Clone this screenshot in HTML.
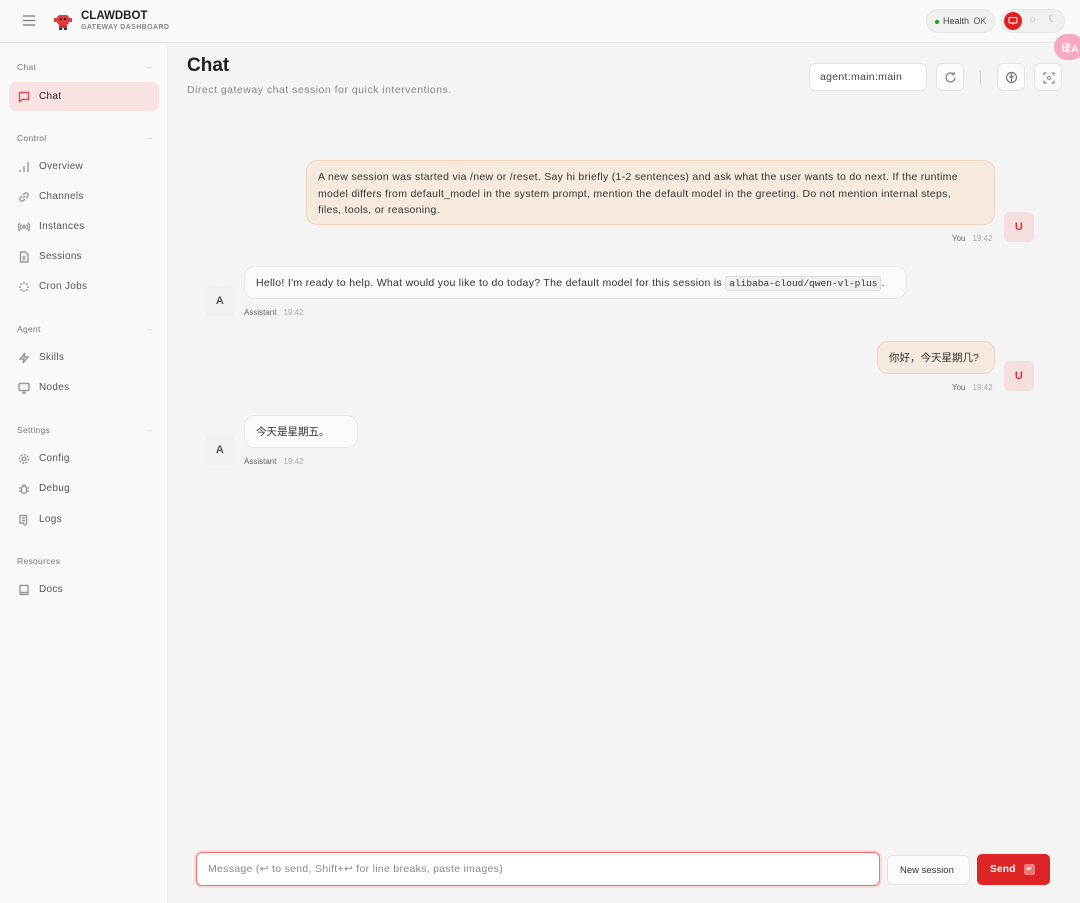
<!DOCTYPE html>
<html><head><meta charset="utf-8"><style>
*{box-sizing:border-box;margin:0;padding:0}
body{width:1080px;height:903px;overflow:hidden;background:#f4f4f4;font-family:"Liberation Sans","Noto Sans CJK SC",sans-serif;color:#333;position:relative;letter-spacing:.3px}
.top{position:absolute;left:0;top:0;width:1080px;height:43px;background:#f9f9f9;border-bottom:1px solid #e4e4e4}
.side{position:absolute;left:0;top:43px;width:168px;height:860px;background:#f9f9f9;border-right:1px solid #eee}
.sec{position:absolute;left:17px;font-size:8.5px;color:#777;width:135px}
.sec span{position:absolute;right:0;color:#bbb}
.nav{position:absolute;left:9px;width:150px;height:29px;border-radius:7px;font-size:10px;color:#555;display:flex;align-items:center;padding-left:9px}
.nav svg{width:12px;height:12px;margin-right:9px;stroke:#999;fill:none;stroke-width:1.4}
.nav.act{background:#f9e2e2;color:#222}
.nav.act svg{stroke:#e05050}
.bub{position:absolute;border-radius:11px;font-size:10.5px;line-height:16.5px;color:#333;padding:8px 11px;white-space:nowrap}
.u{background:#f6e9de;border:1px solid #f3d5bf}
.a{background:#fafafa;border:1px solid #e7e7e7}
.av{position:absolute;width:30px;height:30px;border-radius:6px;font-size:11px;font-weight:bold;display:flex;align-items:center;justify-content:center}
.av.u2{background:#f4dede;color:#d33}
.av.a2{background:#f0f0f0;color:#555}
.meta{position:absolute;font-size:8px;color:#666;letter-spacing:0}
.meta i{font-style:normal;color:#aaa;margin-left:7px}
.btn{position:absolute;background:#fbfbfb;border:1px solid #e3e3e3;border-radius:6px}
</style></head><body>
<div class="top">
 <svg style="position:absolute;left:23px;top:15px" width="12" height="11" viewBox="0 0 12 11"><path d="M0 1h12M0 5.5h12M0 10h12" stroke="#777" stroke-width="1.3"/></svg>
 <svg style="position:absolute;left:53px;top:12px" width="20" height="20" viewBox="0 0 20 20"><rect x="4" y="3" width="12" height="10" rx="3" fill="#e03c3c"/><rect x="1" y="6" width="3" height="4" fill="#e03c3c"/><rect x="16" y="6" width="3" height="4" fill="#e03c3c"/><rect x="7" y="6" width="2" height="2" fill="#222"/><rect x="11" y="6" width="2" height="2" fill="#222"/><rect x="6" y="13" width="8" height="3" fill="#c33"/><rect x="6" y="16" width="3" height="2" fill="#333"/><rect x="11" y="16" width="3" height="2" fill="#333"/></svg>
 <div style="position:absolute;left:81px;top:10px;font-size:11.5px;font-weight:bold;color:#222;letter-spacing:0">CLAWDBOT</div>
 <div style="position:absolute;left:81px;top:24px;font-size:7px;font-weight:bold;color:#888;letter-spacing:.4px">GATEWAY DASHBOARD</div>
 <div style="position:absolute;left:926px;top:9px;width:69px;height:24px;border-radius:12px;background:#f0f0f0;border:1px solid #e6e6e6;font-size:9px;color:#444;padding:6px 0 0 16px;letter-spacing:0">Health <span style="color:#555;margin-left:2px">OK</span><span style="position:absolute;left:8px;top:10px;width:4px;height:4px;border-radius:2px;background:#1a1"></span></div>
 <div style="position:absolute;left:1001px;top:9px;width:64px;height:24px;border-radius:12px;background:#f0f0f0;border:1px solid #e6e6e6">
  <div style="position:absolute;left:2px;top:2px;width:18px;height:18px;border-radius:9px;background:#e02020"></div>
  <svg style="position:absolute;left:6px;top:7px" width="10" height="8" viewBox="0 0 10 8"><rect x="1" y="0.5" width="8" height="5.5" rx="1" fill="none" stroke="#fff"/><path d="M5 6v1.5" stroke="#fff"/></svg>
  <span style="position:absolute;left:26px;top:4px;font-size:10px;color:#bbb">☼</span>
  <span style="position:absolute;left:46px;top:4px;font-size:10px;color:#aaa">☾</span>
 </div>
</div>
<div style="position:absolute;left:1054px;top:34px;width:30px;height:26px;border-radius:13px;background:#f7a9c2;color:#fff;font-size:10px;font-weight:bold;padding:6px 0 0 7px">译A</div>
<div class="side">
 <div class="sec" style="top:19px">Chat<span>–</span></div>
 <div class="nav act" style="top:39px"><svg viewBox="0 0 12 12"><path d="M1.5 1.5h9v7h-6l-3 2z"/></svg>Chat</div>
 <div class="sec" style="top:90px">Control<span>–</span></div>
 <div class="nav" style="top:109px"><svg viewBox="0 0 12 12"><path d="M2 11v-2M6 11V5M10 11V1"/></svg>Overview</div>
 <div class="nav" style="top:139px"><svg viewBox="0 0 12 12"><path d="M5 7l2-2M4 5L2.5 6.5a2 2 0 003 3L7 8M8 7l1.5-1.5a2 2 0 00-3-3L5 4"/></svg>Channels</div>
 <div class="nav" style="top:169px"><svg viewBox="0 0 12 12"><circle cx="6" cy="6" r="1.2"/><path d="M3.5 3.5a3.5 3.5 0 000 5M8.5 3.5a3.5 3.5 0 010 5M2 2a5.5 5.5 0 000 8M10 2a5.5 5.5 0 010 8"/></svg>Instances</div>
 <div class="nav" style="top:199px"><svg viewBox="0 0 12 12"><path d="M2.5 1h5l2.5 2.5V11h-7.5zM4.5 6h3M4.5 8h3"/></svg>Sessions</div>
 <div class="nav" style="top:229px"><svg viewBox="0 0 12 12"><path d="M6 1v2M6 9v2M1 6h2M9 6h2M2.5 2.5l1.4 1.4M8.1 8.1l1.4 1.4M2.5 9.5l1.4-1.4M8.1 3.9l1.4-1.4"/></svg>Cron Jobs</div>
 <div class="sec" style="top:281px">Agent<span>–</span></div>
 <div class="nav" style="top:300px"><svg viewBox="0 0 12 12"><path d="M7 1L2 7h4l-1 4 5-6H6z"/></svg>Skills</div>
 <div class="nav" style="top:330px"><svg viewBox="0 0 12 12"><rect x="1" y="1.5" width="10" height="7" rx="1"/><path d="M6 8.5V11M4 11h4"/></svg>Nodes</div>
 <div class="sec" style="top:382px">Settings<span>–</span></div>
 <div class="nav" style="top:401px"><svg viewBox="0 0 12 12"><circle cx="6" cy="6" r="1.8"/><circle cx="6" cy="6" r="4.3" stroke-dasharray="2 1.3"/></svg>Config</div>
 <div class="nav" style="top:431px"><svg viewBox="0 0 12 12"><rect x="3.5" y="3" width="5" height="7.5" rx="2.5"/><path d="M1 5h2.5M8.5 5H11M1 8h2.5M8.5 8H11M4.5 1.5l1 1.5M7.5 1.5l-1 1.5"/></svg>Debug</div>
 <div class="nav" style="top:462px"><svg viewBox="0 0 12 12"><path d="M2 1.5h6.5v8a1.5 1.5 0 01-3 0V9H2zM4 4h3M4 6.5h3"/></svg>Logs</div>
 <div class="sec" style="top:513px">Resources</div>
 <div class="nav" style="top:532px"><svg viewBox="0 0 12 12"><path d="M2 1.5h8v9H3a1 1 0 01-1-1zM2 9.5a1 1 0 011-1h7"/></svg>Docs</div>
</div>
<div style="position:absolute;left:187px;top:55px;font-size:19px;font-weight:bold;color:#1e1e1e;letter-spacing:0">Chat</div>
<div style="position:absolute;left:187px;top:84px;font-size:10.5px;color:#888;letter-spacing:.5px">Direct gateway chat session for quick interventions.</div>
<div class="btn" style="left:809px;top:63px;width:118px;height:28px;background:#fff;font-size:10.5px;color:#444;padding:7px 0 0 10px">agent:main:main</div>
<div class="btn" style="left:936px;top:63px;width:28px;height:28px"><svg style="position:absolute;left:7px;top:7px" width="13" height="13" viewBox="0 0 13 13"><path d="M11 6.5a4.5 4.5 0 11-1.3-3.2M10 1v2.6H7.4" fill="none" stroke="#888" stroke-width="1.3"/></svg></div>
<div style="position:absolute;left:980px;top:70px;width:1px;height:14px;background:#ccc"></div>
<div class="btn" style="left:997px;top:63px;width:28px;height:28px"><svg style="position:absolute;left:7px;top:7px" width="13" height="13" viewBox="0 0 13 13"><circle cx="6.5" cy="6.5" r="5" fill="none" stroke="#777" stroke-width="1.2"/><path d="M6.5 2.5v8M4.5 5l2 2 2-2" fill="none" stroke="#777" stroke-width="1.2"/></svg></div>
<div class="btn" style="left:1034px;top:63px;width:28px;height:28px"><svg style="position:absolute;left:8px;top:8px" width="12" height="12" viewBox="0 0 12 12"><path d="M1 3.5V1h2.5M8.5 1H11v2.5M11 8.5V11H8.5M3.5 11H1V8.5" fill="none" stroke="#888" stroke-width="1.2"/><circle cx="6" cy="6" r="1.5" fill="none" stroke="#888"/></svg></div>

<div class="bub u" style="left:306px;top:160px;width:689px;height:65px">A new session was started via /new or /reset. Say hi briefly (1-2 sentences) and ask what the user wants to do next. If the runtime<br>model differs from default_model in the system prompt, mention the default model in the greeting. Do not mention internal steps,<br>files, tools, or reasoning.</div>
<div class="av u2" style="left:1004px;top:212px">U</div>
<div class="meta" style="left:952px;top:234px">You<i>19:42</i></div>

<div class="bub a" style="left:244px;top:266px;width:663px;height:33px">Hello! I'm ready to help. What would you like to do today? The default model for this session is <span style="font-family:'Liberation Mono',monospace;font-size:9.5px;background:#efefef;border:1px solid #ddd;border-radius:3px;padding:1px 3px;letter-spacing:0">alibaba-cloud/qwen-vl-plus</span>.</div>
<div class="av a2" style="left:205px;top:286px">A</div>
<div class="meta" style="left:244px;top:308px">Assistant<i>19:42</i></div>

<div class="bub u" style="left:877px;top:341px;width:118px;height:33px;letter-spacing:0">你好，今天星期几?</div>
<div class="av u2" style="left:1004px;top:361px">U</div>
<div class="meta" style="left:952px;top:383px">You<i>19:42</i></div>

<div class="bub a" style="left:244px;top:415px;width:114px;height:33px;letter-spacing:0">今天是星期五。</div>
<div class="av a2" style="left:205px;top:435px">A</div>
<div class="meta" style="left:244px;top:457px">Assistant<i>19:42</i></div>

<div style="position:absolute;left:196px;top:852px;width:684px;height:34px;background:#fff;border:1.5px solid #f07070;border-radius:6px;box-shadow:0 0 0 2px #fbdada;font-size:10.5px;color:#888;padding:10px 0 0 11px">Message (↩ to send, Shift+↩ for line breaks, paste images)</div>
<div class="btn" style="left:887px;top:855px;width:83px;height:30px;font-size:9.5px;color:#333;padding:9px 0 0 12px;letter-spacing:0">New session</div>
<div style="position:absolute;left:977px;top:854px;width:73px;height:31px;background:#dd2525;border-radius:5px;color:#fff;font-size:10px;font-weight:bold;padding:10px 0 0 13px">Send<span style="position:absolute;left:47px;top:10px;width:11px;height:11px;background:#ee7777;border-radius:2px;font-size:7px;text-align:center;line-height:11px">↵</span></div>
</body></html>
